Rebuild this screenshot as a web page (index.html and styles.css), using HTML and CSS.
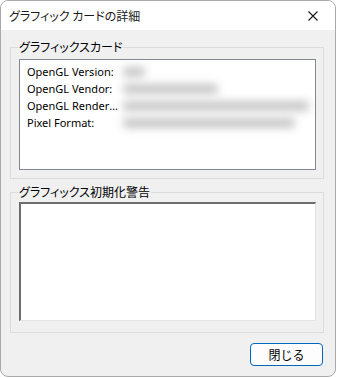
FILE: index.html
```html
<!DOCTYPE html>
<html lang="ja">
<head>
  <meta charset="UTF-8" />
  <meta name="viewport" content="width=device-width, initial-scale=1.0"/>
  <title>グラフィック カードの詳細</title>
  <link rel="stylesheet" href="styles.css">
</head>
<body>
  <div class="window">
    <div class="titlebar">
      <span class="title">グラフィック カードの詳細</span>
      <button class="close" aria-label="閉じる">
        <svg width="10" height="10" viewBox="0 0 10 10">
          <path d="M0.5 0.5 L9.5 9.5 M9.5 0.5 L0.5 9.5" stroke="#1a1a1a" stroke-width="1.1" fill="none"/>
        </svg>
      </button>
    </div>

    <div class="content">
      <fieldset class="group first">
        <legend>グラフィックスカード</legend>
        <div class="listbox">
          <div class="row"><span class="key">OpenGL Version:</span><span class="val w1"></span></div>
          <div class="row"><span class="key">OpenGL Vendor:</span><span class="val w2"></span></div>
          <div class="row"><span class="key">OpenGL Renderer:</span><span class="val w3"></span></div>
          <div class="row"><span class="key">Pixel Format:</span><span class="val w4"></span></div>
        </div>
      </fieldset>

      <fieldset class="group second">
        <legend>グラフィックス初期化警告</legend>
        <div class="warnbox"></div>
      </fieldset>

      <div class="actions">
        <button class="btn">閉じる</button>
      </div>
    </div>
  </div>
</body>
</html>
```

FILE: styles.css
```css
* {
  box-sizing: border-box;
}

body {
  margin: 0;
  background: #ffffff;
  font-family: "Noto Sans", "Noto Sans CJK JP", sans-serif;
  font-size: 12px;
  color: #000;
}

.window {
  width: 336px;
  height: 377px;
  border: 1px solid #a9a9a9;
  border-radius: 8px;
  overflow: hidden;
  display: flex;
  flex-direction: column;
  background: #f0f0f0;
}

.titlebar {
  height: 29px;
  background: #ffffff;
  display: flex;
  align-items: center;
  justify-content: space-between;
  padding-left: 8px;
}

.title {
  font-family: "Noto Sans CJK JP", sans-serif;
  font-feature-settings: "palt";
  font-size: 12px;
  color: #1a1a1a;
  margin-top: -1px;
}

.close {
  width: 46px;
  height: 29px;
  border: none;
  background: none;
  padding: 0;
  display: flex;
  align-items: center;
  justify-content: center;
  margin-right: -1px;
}

.content {
  flex: 1;
  padding: 9px 11px 0 9px;
  display: flex;
  flex-direction: column;
}

.group {
  margin: 0;
  border: 1px solid #dcdcdc;
  padding: 0 7px 8px 8px;
  min-width: 0;
}

.group legend {
  font-family: "Noto Sans CJK JP", sans-serif;
  font-feature-settings: "palt";
  font-size: 12px;
  line-height: 16px;
  padding: 0 1px;
  margin-left: -1px;
  color: #000;
}

.first .listbox {
  margin-top: 4px;
}

.second {
  margin-top: 5px;
  padding-bottom: 11px;
}

.listbox {
  height: 111px;
  background: #ffffff;
  border: 1px solid #828790;
  padding: 3px 0 0 7px;
}

.row {
  display: flex;
  align-items: center;
  height: 17px;
}

.key {
  width: 91px;
  margin-right: 5px;
  white-space: nowrap;
  overflow: hidden;
  text-overflow: ellipsis;
  font-size: 11px;
  color: #000;
}

.val {
  height: 10px;
  background: #c6c6c6;
  border-radius: 4px;
  filter: blur(4px);
}

.w1 { width: 22px; }
.w2 { width: 95px; }
.w3 { width: 186px; }
.w4 { width: 172px; }

.warnbox {
  margin-top: 2px;
  height: 119px;
  background: #ffffff;
  border-top: 2px solid #6d6d6d;
  border-left: 2px solid #6d6d6d;
  border-right: 1px solid #e3e3e3;
  border-bottom: 1px solid #e3e3e3;
}

.actions {
  display: flex;
  justify-content: flex-end;
  padding-top: 10px;
  padding-right: 1px;
}

.btn {
  width: 73px;
  height: 23px;
  border: 1px solid #0067c0;
  border-radius: 4px;
  background: #fdfdfd;
  font-family: "Noto Sans CJK JP", sans-serif;
  font-size: 12px;
  color: #000;
  padding: 0;
}
```
